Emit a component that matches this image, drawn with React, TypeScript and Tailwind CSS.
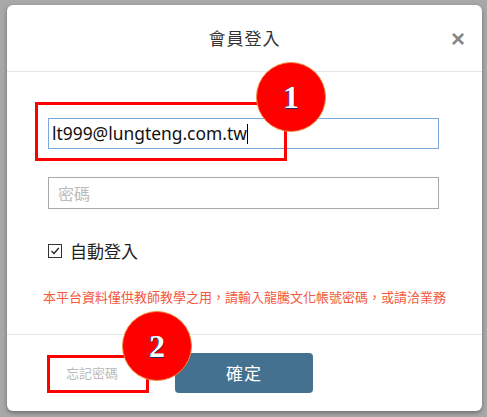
import React from "react";

const cjk = { fontFamily: '"Noto Sans CJK TC", "Noto Sans", sans-serif' };

export default function App() {
  return (
    <div className="w-[487px] h-[417px] bg-[#a8a8a8] pt-[5px] pl-[7px]" style={cjk}>
      <div className="relative w-[475px] h-[406px] bg-white rounded-[6px] shadow-[0_2px_4px_rgba(0,0,0,0.35)] flex flex-col">
        {/* header */}
        <div className="relative h-[67px] border-b border-[#e5e5e5] flex items-center justify-center">
          <span className="text-[17px] text-[#333] tracking-[1px]">會員登入</span>
          <span className="absolute right-[17px] top-[22px] text-[24px] leading-none font-bold text-[#888]" style={{ fontFamily: '"Liberation Sans", sans-serif' }}>×</span>
        </div>
        {/* body */}
        <div className="h-[263px] pt-[46px] border-b border-[#e5e5e5] flex flex-col">
          <div className="ml-[41px] w-[391px] h-[31px] border border-[#7aa9dc] flex items-center pl-[3px]">
            <span className="text-[17.4px] text-[#111] leading-none" style={{ fontFamily: '"Noto Sans", sans-serif' }}>lt999@lungteng.com.tw</span>
            <span className="w-px h-[20px] bg-black" />
          </div>
          <div className="ml-[41px] mt-[28px] w-[391px] h-[32px] border border-[#a9a9a9] flex items-center pl-[9px]">
            <span className="text-[16px] text-[#bbb]">密碼</span>
          </div>
          <div className="ml-[41px] mt-[29px] flex items-center gap-[8px]">
            <div className="w-[14px] h-[14px] border border-[#333] flex items-center justify-center">
              <svg width="10" height="10" viewBox="0 0 10 10">
                <path d="M1.5 5 L4 7.5 L8.8 2" stroke="#222" strokeWidth="1.3" fill="none" />
              </svg>
            </div>
            <span className="text-[17px] text-[#222]">自動登入</span>
          </div>
          <div className="mt-[23px] text-center text-[13px] text-[#f4583c]">
            本平台資料僅供教師教學之用，請輸入龍騰文化帳號密碼，或請洽業務
          </div>
        </div>
        {/* footer */}
        <div className="flex-1 flex items-center pl-[40px]">
          <div className="w-[102px] h-[38px] flex items-center pl-[19px] text-[13px] text-[#bbb]">忘記密碼</div>
          <div className="ml-[26px] w-[138px] h-[40px] rounded-[4px] bg-[#43718f] flex items-center justify-center text-[17px] text-white tracking-[1px]">確定</div>
        </div>

        {/* overlays */}
        <div className="absolute left-[28px] top-[97px] w-[252px] h-[59px] border-[3px] border-[#ff0000]" />
        <div className="absolute left-[40px] top-[350px] w-[102px] h-[38px] border-[3px] border-[#ff0000]" />
        <div className="absolute left-[249px] top-[57px] w-[70px] h-[70px] rounded-full bg-[#ff0000] border border-[#f08a40] flex items-center justify-center">
          <span className="text-[32px] font-bold text-white leading-none" style={{ fontFamily: '"Liberation Serif", serif', textShadow: "-1px 0 #1a2a6a, 0 1px #1a2a6a" }}>1</span>
        </div>
        <div className="absolute left-[115px] top-[306px] w-[70px] h-[70px] rounded-full bg-[#ff0000] border border-[#f08a40] flex items-center justify-center">
          <span className="text-[32px] font-bold text-white leading-none" style={{ fontFamily: '"Liberation Serif", serif', textShadow: "-1px 0 #1a2a6a, 0 1px #1a2a6a" }}>2</span>
        </div>
      </div>
    </div>
  );
}
